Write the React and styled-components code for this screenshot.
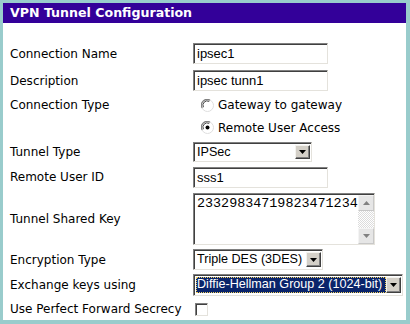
import React from "react";
import styled, { createGlobalStyle } from "styled-components";

const GlobalStyle = createGlobalStyle`
  html, body {
    margin: 0;
    padding: 0;
    background: #fff;
  }
`;

const Frame = styled.div`
  box-sizing: border-box;
  width: 410px;
  height: 324px;
  background: #fff;
  border-style: solid;
  border-color: #99cccc;
  border-width: 3px 4px 4px 3px;
  font-family: "DejaVu Sans", Verdana, sans-serif;
  font-size: 12px;
  color: #000;
`;

const Title = styled.div`
  height: 20px;
  line-height: 20px;
  background: #330099;
  color: #fff;
  font-weight: bold;
  font-size: 12.6px;
  padding-left: 7px;
`;

const Form = styled.div`
  padding: 17px 0 0 7px;
`;

const Row = styled.div`
  display: grid;
  grid-template-columns: 183px 1fr;
  align-items: center;
  height: ${(p) => p.$h}px;
`;

const Label = styled.div`
  white-space: nowrap;
`;

const TextBox = styled.div`
  box-sizing: border-box;
  width: 135px;
  height: 21px;
  border: 1px solid;
  border-color: #808080 #e4e2dc #e4e2dc #808080;
  box-shadow: inset 1px 1px 0 #404040;
  padding: 1px 0 0 3px;
  font-family: "Liberation Sans", Arial, sans-serif;
  font-size: 13px;
  line-height: 17px;
`;

const RadioLine = styled.label`
  display: flex;
  align-items: center;
  gap: 4px;
  padding-left: 8px;
  white-space: nowrap;
`;

const SelectBox = styled.div`
  box-sizing: border-box;
  display: flex;
  width: ${(p) => p.$w}px;
  height: ${(p) => p.$hgt || 21}px;
  border: 1px solid;
  border-color: #808080 #e4e2dc #e4e2dc #808080;
  box-shadow: inset 1px 1px 0 #404040;
  padding: 2px 1px 2px 2px;
  background: #fff;
  font-family: "Liberation Sans", Arial, sans-serif;
  font-size: 12.6px;
`;

const SelectText = styled.div`
  flex: 1;
  box-sizing: border-box;
  line-height: 15px;
  padding-left: 1px;
  white-space: nowrap;
  overflow: hidden;
  background: ${(p) => (p.$active ? "#0a246a" : "transparent")};
  color: ${(p) => (p.$active ? "#fff" : "#000")};
  outline: ${(p) => (p.$active ? "1px dotted #f0d060" : "none")};
  outline-offset: -1px;
`;

const ArrowButton = styled.div`
  box-sizing: border-box;
  width: 15px;
  flex: none;
  display: flex;
  align-items: center;
  justify-content: center;
  background: #d4d0c8;
  border: 1px solid;
  border-color: #f4f3ef #404040 #404040 #f4f3ef;
  box-shadow: inset -1px -1px 0 #808080;
`;

const ShareBox = styled.div`
  box-sizing: border-box;
  display: flex;
  width: 182px;
  height: 52px;
  border: 1px solid;
  border-color: #808080 #e4e2dc #e4e2dc #808080;
  box-shadow: inset 1px 1px 0 #404040;
  padding: 1px 0 0 1px;
  background: #fff;
`;

const ShareText = styled.div`
  flex: 1;
  padding: 1px 0 0 2px;
  font-family: "Liberation Mono", "Courier New", monospace;
  font-size: 13.4px;
  line-height: 16px;
  white-space: nowrap;
  overflow: hidden;
`;

const ScrollBar = styled.div`
  width: 16px;
  display: flex;
  flex-direction: column;
  background-color: #fff;
  background-image: repeating-conic-gradient(#dcdcdc 0 25%, #fff 0 50%);
  background-size: 2px 2px;
`;

const ScrollButton = styled.div`
  box-sizing: border-box;
  height: 16px;
  display: flex;
  align-items: center;
  justify-content: center;
  background: #e6e6e6;
  border: 1px solid;
  border-color: #f4f4f4 #c8c8c8 #c8c8c8 #f4f4f4;
`;

const Track = styled.div`
  flex: 1;
`;

const CheckBox = styled.div`
  box-sizing: border-box;
  width: 13px;
  height: 13px;
  margin-left: 2px;
  background: #fff;
  border: 1px solid;
  border-color: #808080 #e4e2dc #e4e2dc #808080;
  box-shadow: inset 1px 1px 0 #404040;
`;

const Triangle = ({ up, color = "#000" }) => (
  <svg width="7" height="4" viewBox="0 0 7 4">
    <path d={up ? "M3.5 0 L7 4 L0 4 Z" : "M0 0 L7 0 L3.5 4 Z"} fill={color} />
  </svg>
);

const Radio = ({ checked }) => (
  <svg width="13" height="13" viewBox="0 0 13 13">
    <circle cx="6.5" cy="6.5" r="6" fill="#fff" stroke="#dedede" />
    <path d="M1.2 9 A5.7 5.7 0 0 1 9 1.2" fill="none" stroke="#808080" strokeWidth="1.2" />
    <path d="M2.4 8.2 A4.3 4.3 0 0 1 8.2 2.4" fill="none" stroke="#404040" strokeWidth="1" />
    {checked && <circle cx="6.5" cy="6.5" r="2" fill="#000" />}
  </svg>
);

const Select = ({ width, height, value, active }) => (
  <SelectBox $w={width} $hgt={height}>
    <SelectText $active={active}>{value}</SelectText>
    <ArrowButton>
      <Triangle />
    </ArrowButton>
  </SelectBox>
);

export default function App() {
  return (
    <>
      <GlobalStyle />
      <Frame>
        <Title>VPN Tunnel Configuration</Title>
        <Form>
          <Row $h={27}>
            <Label>Connection Name</Label>
            <TextBox>ipsec1</TextBox>
          </Row>
          <Row $h={27}>
            <Label>Description</Label>
            <TextBox>ipsec tunn1</TextBox>
          </Row>
          <Row $h={22}>
            <Label>Connection Type</Label>
            <RadioLine>
              <Radio />
              Gateway to gateway
            </RadioLine>
          </Row>
          <Row $h={23}>
            <Label />
            <RadioLine>
              <Radio checked />
              Remote User Access
            </RadioLine>
          </Row>
          <Row $h={25}>
            <Label>Tunnel Type</Label>
            <Select width={119} height={20} value="IPSec" />
          </Row>
          <Row $h={26}>
            <Label>Remote User ID</Label>
            <TextBox>sss1</TextBox>
          </Row>
          <Row $h={57}>
            <Label>Tunnel Shared Key</Label>
            <ShareBox>
              <ShareText>23329834719823471234</ShareText>
              <ScrollBar>
                <ScrollButton>
                  <Triangle up color="#808080" />
                </ScrollButton>
                <Track />
                <ScrollButton>
                  <Triangle color="#808080" />
                </ScrollButton>
              </ScrollBar>
            </ShareBox>
          </Row>
          <Row $h={25}>
            <Label>Encryption Type</Label>
            <Select width={130} value="Triple DES (3DES)" />
          </Row>
          <Row $h={26}>
            <Label>Exchange keys using</Label>
            <Select width={210} height={22} value="Diffie-Hellman Group 2 (1024-bit)" active />
          </Row>
          <Row $h={22}>
            <Label>Use Perfect Forward Secrecy</Label>
            <CheckBox />
          </Row>
        </Form>
      </Frame>
    </>
  );
}
